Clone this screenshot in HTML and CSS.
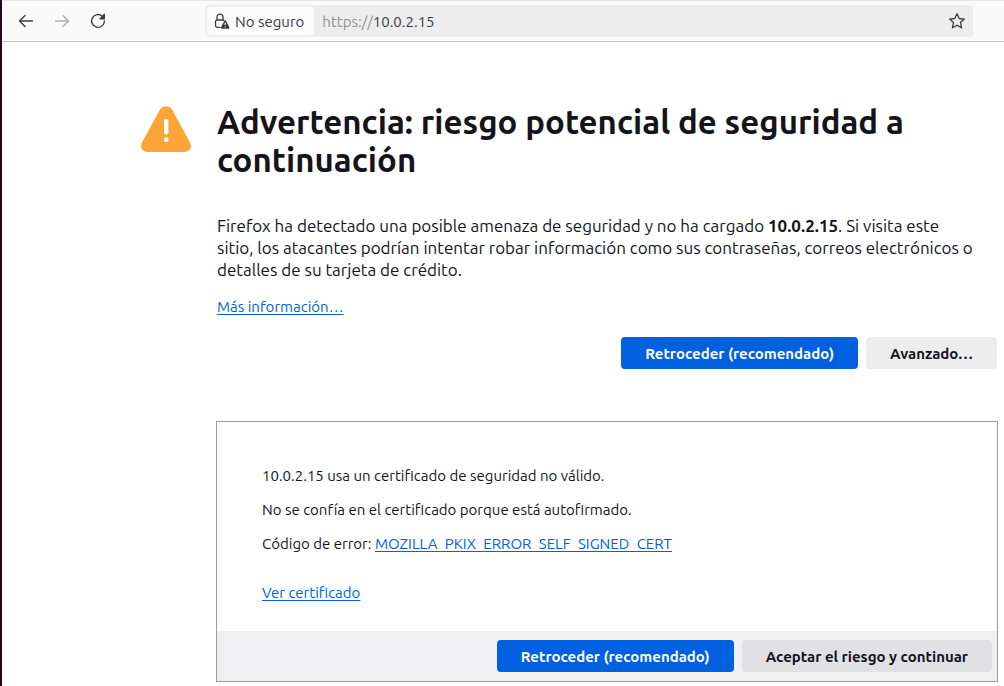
FILE: index.html
```
<!DOCTYPE html>
<html lang="es">
<head>
<meta charset="utf-8">
<meta name="viewport" content="width=device-width, initial-scale=1">
<title>Advertencia: riesgo potencial de seguridad a continuación</title>
<link rel="stylesheet" href="styles.css">
</head>
<body>
<header class="toolbar">
  <nav class="nav-buttons" aria-label="Navegación">
    <button class="icon-button" type="button" aria-label="Atrás">
      <svg width="16" height="16" viewBox="0 0 16 16" fill="none" stroke="currentColor" stroke-width="1.4" stroke-linecap="round" stroke-linejoin="round"><path d="M14.5 8H1.5M7 2.5 1.5 8 7 13.5"/></svg>
    </button>
    <button class="icon-button" type="button" aria-label="Adelante" disabled>
      <svg width="16" height="16" viewBox="0 0 16 16" fill="none" stroke="currentColor" stroke-width="1.4" stroke-linecap="round" stroke-linejoin="round"><path d="M1.5 8h13M9 2.5 14.5 8 9 13.5"/></svg>
    </button>
    <button class="icon-button" type="button" aria-label="Recargar">
      <svg width="16" height="16" viewBox="0 0 16 16"><path d="M12.3 3.2A6.4 6.4 0 1 0 14.4 8" fill="none" stroke="currentColor" stroke-width="1.4" stroke-linecap="round"/><path d="M15 1.2v4.6a.6.6 0 0 1-.6.6H9.9c-.5 0-.8-.6-.4-1L14 .8c.4-.4 1-.1 1 .4z" fill="currentColor"/></svg>
    </button>
  </nav>
  <div class="address-bar">
    <button class="identity" type="button">
      <svg width="16" height="16" viewBox="0 0 16 16"><path d="M6 14.3H3.2A1.7 1.7 0 0 1 1.5 12.6V8.7A1.7 1.7 0 0 1 3.2 7h5.6c.5 0 .9.2 1.2.5M3 7V4.2a3 3 0 0 1 6 0V7" fill="none" stroke="currentColor" stroke-width="1.3" stroke-linecap="round"/><path d="M10.4 7.8 7 14.3c-.3.7.1 1.4.8 1.4h6.800c.7 0 1.100-.7.8-1.400L12 7.800c-.4-.7-1.200-.7-1.600 0z" fill="currentColor"/><path d="M11.200 9.800v2.300M11.200 13.400v1" stroke="#fff" stroke-width="1.200"/></svg>
      <span class="identity-label">No seguro</span>
    </button>
    <span class="url"><span class="scheme">https://</span>10.0.2.15</span>
    <button class="bookmark" type="button" aria-label="Añadir marcador">
      <svg width="18" height="18" viewBox="0 0 18 18" fill="none" stroke="currentColor" stroke-width="1.3" stroke-linejoin="round"><path d="m9 1.800 2.200 4.700 5.200.6-3.900 3.500 1.100 5.200L9 13.200l-4.600 2.600 1.100-5.200L1.600 7.100l5.200-.6z"/></svg>
    </button>
  </div>
</header>
<main class="page">
  <svg class="warning-icon" viewBox="0 0 50 46" aria-hidden="true"><path d="M19 3.600C21.600-1 28.400-1 31 3.600L49 36.500c2.500 4.500-.5 9.500-5.700 9.500H6.700C1.500 46-1.500 41 1 36.500z" fill="#ffa436"/><rect x="23" y="13" width="4.400" height="15.500" rx="2.200" fill="#fff"/><rect x="23" y="31.500" width="4.400" height="4.500" rx="1.400" fill="#fff"/></svg>
  <div class="content">
    <h1>Advertencia: riesgo potencial de seguridad a continuación</h1>
    <p class="summary">Firefox ha detectado una posible amenaza de seguridad y no ha cargado <b>10.0.2.15</b>. Si visita este<br>sitio, los atacantes podrían intentar robar información como sus contraseñas, correos electrónicos o<br>detalles de su tarjeta de crédito.</p>
    <p class="more"><a href="#mas-informacion">Más información…</a></p>
    <div class="actions">
      <button class="button primary" type="button">Retroceder (recomendado)</button>
      <button class="button" type="button">Avanzado…</button>
    </div>
    <section class="advanced">
      <div class="details">
        <p>10.0.2.15 usa un certificado de seguridad no válido.</p>
        <p>No se confía en el certificado porque está autofirmado.</p>
        <p>Código de error: <a href="#error">MOZILLA_PKIX_ERROR_SELF_SIGNED_CERT</a></p>
        <p class="certificate"><a href="#certificado">Ver certificado</a></p>
      </div>
      <div class="actions panel-actions">
        <button class="button primary" type="button">Retroceder (recomendado)</button>
        <button class="button accept" type="button">Aceptar el riesgo y continuar</button>
      </div>
    </section>
  </div>
</main>
</body>
</html>
```
FILE: styles.css
```
* {
  box-sizing: border-box;
}

body {
  margin: 0;
  min-height: 100vh;
  border-left: 2px solid #1d0a1c;
  background: #fff;
  color: #15141a;
  font: 15px/20px Ubuntu, "Noto Sans", sans-serif;
}

h1,
p {
  margin: 0;
}

button {
  border: 0;
  font: inherit;
  color: inherit;
}

svg {
  display: block;
  flex: none;
}

a {
  color: #0061e0;
  text-underline-offset: 2px;
}

.toolbar {
  display: flex;
  align-items: center;
  height: 42px;
  padding-right: 31px;
  border-top: 1px solid #e6e6e6;
  border-bottom: 1px solid #c4c4c6;
  background: #fafafa;
  color: #3c3c40;
}

.nav-buttons {
  display: flex;
  gap: 4px;
  width: 203px;
  padding-left: 8px;
}

.icon-button,
.bookmark {
  display: grid;
  place-items: center;
  width: 32px;
  height: 32px;
  padding: 0;
  background: none;
}

.icon-button:disabled {
  color: #afafb1;
}

.address-bar {
  display: flex;
  flex: 1;
  align-items: center;
  height: 32px;
  padding-left: 2px;
  border-radius: 4px;
  background: #ededed;
}

.identity {
  display: flex;
  align-items: center;
  gap: 5px;
  height: 28px;
  padding: 0 10px 0 7px;
  border-radius: 3px;
  background: #fbfbfb;
}

.identity-label,
.url {
  padding-top: 2px;
}

.url {
  flex: 1;
  padding-left: 8px;
}

.scheme {
  color: #929295;
}

.page {
  display: grid;
  grid-template-columns: 50px minmax(0, 1fr);
  column-gap: 26px;
  padding: 61px 7px 4px 139px;
}

.warning-icon {
  width: 50px;
  height: 46px;
  margin-top: 3px;
}

h1 {
  font-size: 33px;
  line-height: 38px;
}

.summary {
  margin-top: 36px;
  font-size: 17px;
  line-height: 22px;
}

.more {
  margin-top: 16px;
}

.actions {
  display: flex;
  justify-content: flex-end;
  gap: 8px;
  margin-top: 20px;
}

.button {
  height: 32px;
  padding: 2px 24px 0;
  border-radius: 4px;
  background: #ededee;
  font-weight: 700;
}

.primary {
  background: #0061e0;
  color: #fbfbfe;
}

.accept {
  background: #e1e1e4;
}

.advanced {
  margin: 52px -1px 0;
  border: 1px solid #9a9a9c;
}

.details {
  display: grid;
  gap: 14px;
  padding: 44px 45px 28px;
}

.certificate {
  margin-top: 15px;
}

.panel-actions {
  margin: 0;
  padding: 9px 5px;
  background: #f0f0f3;
}
```
